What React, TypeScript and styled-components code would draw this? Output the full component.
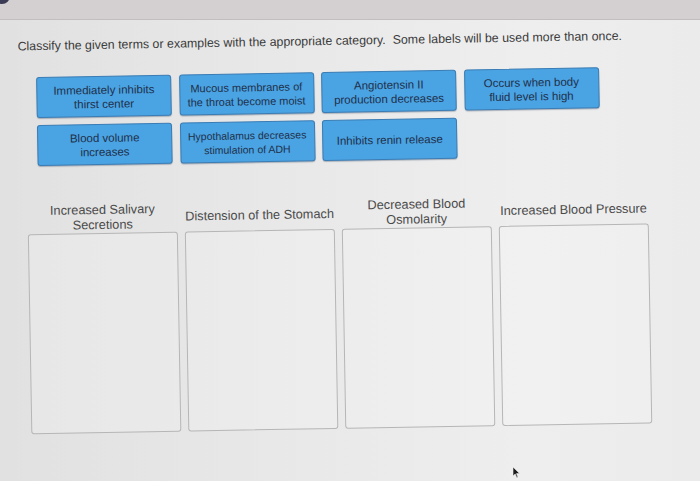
import React from "react";
import styled, { createGlobalStyle } from "styled-components";

const GlobalStyle = createGlobalStyle`
    html, body {
        margin: 0;
        padding: 0;
        overflow: hidden;
    }

    body {
        background: linear-gradient(90deg, #e1e1e1 0%, #e9e9e9 45%, #eeeeee 75%, #ebebeb 100%);
        font-family: "Liberation Sans", Arial, sans-serif;
    }

    #root {
        min-height: 481px;
    }
`;

const TopBar = styled.header`
    height: 19px;
    background: #d4d0d2;
    border-bottom: 1px solid #c2bec0;
    overflow: hidden;
    display: flex;
`;

const InfoDot = styled.span`
    width: 16px;
    height: 16px;
    border-radius: 50%;
    background: #3b3b56;
    margin: -12px 0 0 -6px;
`;

const Sheet = styled.main`
    padding: 14px 0 0 21px;
    transform: rotate(-1deg);
    transform-origin: 329px 220px;
`;

const Prompt = styled.p`
    margin: 0;
    font-size: 12.4px;
    line-height: 14px;
    color: #3a3a3a;
`;

const LabelGrid = styled.div`
    display: grid;
    grid-template-columns: repeat(4, 135px);
    column-gap: 7.5px;
    row-gap: 7px;
    margin: 24px 0 0 18px;
`;

const Label = styled.div<{ $size?: number }>`
    height: 41px;
    box-sizing: border-box;
    display: flex;
    align-items: center;
    justify-content: center;
    text-align: center;
    padding: 0 3px;
    background: #4aa3e3;
    border: 1px solid #3a7db5;
    border-radius: 3px;
    box-shadow: 0 1px 1px rgba(30, 50, 80, 0.3);
    color: #1f304a;
    font-size: ${(p) => p.$size ?? 11.5}px;
    line-height: 14px;
`;

const Categories = styled.div`
    display: grid;
    grid-template-columns: repeat(4, 150px);
    column-gap: 7px;
    margin: 37px 0 0 7px;
`;

const Category = styled.section`
    display: flex;
    flex-direction: column;
`;

const CategoryTitle = styled.h3`
    margin: 0 0 1px;
    height: 30px;
    display: flex;
    align-items: center;
    justify-content: center;
    text-align: center;
    font-size: 12.75px;
    line-height: 15px;
    font-weight: normal;
    color: #4a4a4a;
`;

const DropZone = styled.div`
    height: 200px;
    box-sizing: border-box;
    border: 1px solid #b6b6b6;
    border-radius: 3px;
    background: rgba(255, 255, 255, 0.18);
`;

const Pointer = styled.svg`
    position: absolute;
    left: 512px;
    top: 466px;
`;

const labels: { text: React.ReactNode; size?: number }[] = [
    { text: <>Immediately inhibits<br />thirst center</> },
    { text: <>Mucous membranes of<br />the throat become moist</>, size: 11 },
    { text: <>Angiotensin II<br />production decreases</> },
    { text: <>Occurs when body<br />fluid level is high</> },
    { text: <>Blood volume<br />increases</> },
    { text: <>Hypothalamus decreases<br />stimulation of ADH</>, size: 10.5 },
    { text: "Inhibits renin release" },
];

const categories: React.ReactNode[] = [
    <>Increased Salivary<br />Secretions</>,
    "Distension of the Stomach",
    <>Decreased Blood<br />Osmolarity</>,
    "Increased Blood Pressure",
];

export default function App() {
    return (
        <>
            <GlobalStyle />
            <TopBar>
                <InfoDot />
            </TopBar>
            <Sheet>
                <Prompt>
                    Classify the given terms or examples with the appropriate category.&nbsp; Some labels will be used more than once.
                </Prompt>

                <LabelGrid>
                    {labels.map((l, i) => (
                        <Label key={i} $size={l.size}>
                            <span>{l.text}</span>
                        </Label>
                    ))}
                </LabelGrid>

                <Categories>
                    {categories.map((c, i) => (
                        <Category key={i}>
                            <CategoryTitle>
                                <span>{c}</span>
                            </CategoryTitle>
                            <DropZone />
                        </Category>
                    ))}
                </Categories>
            </Sheet>
            <Pointer width="9" height="13" viewBox="0 0 9 13">
                <path d="M1 1 L1 10 L3.2 8 L4.8 11.8 L6 11.3 L4.5 7.6 L7.6 7.6 Z" fill="#1d1d1d" stroke="#f2f2f2" strokeWidth="0.6" />
            </Pointer>
        </>
    );
}
